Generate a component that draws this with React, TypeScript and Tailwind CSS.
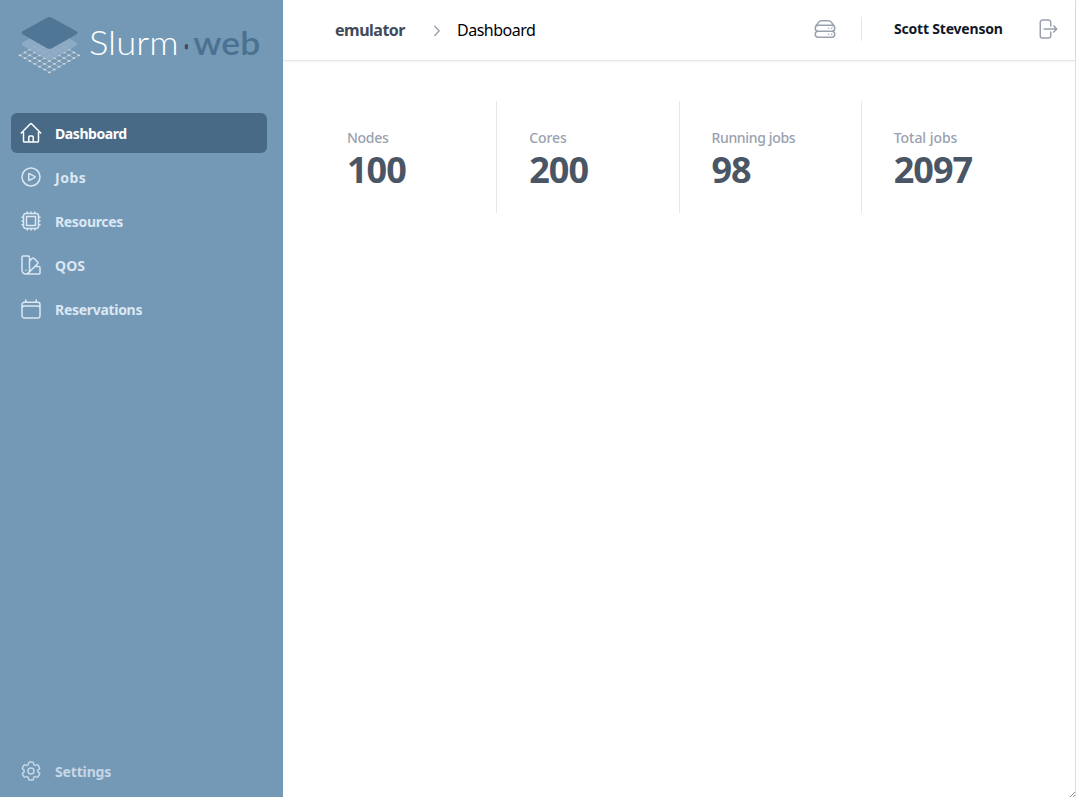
import type { ReactNode } from "react";
import type { IconType } from "react-icons";
import {
  HiOutlineHome,
  HiOutlinePlayCircle,
  HiOutlineCpuChip,
  HiOutlineSwatch,
  HiOutlineCalendar,
  HiOutlineCog6Tooth,
  HiOutlineServerStack,
  HiOutlineArrowRightOnRectangle,
} from "react-icons/hi2";

type NavItem = { label: string; icon: IconType; tracking: string };

const navigation: NavItem[] = [
  { label: "Dashboard", icon: HiOutlineHome, tracking: "pt-[2px] tracking-[-0.42px]" },
  { label: "Jobs", icon: HiOutlinePlayCircle, tracking: "pt-[2px] tracking-[0.5px]" },
  { label: "Resources", icon: HiOutlineCpuChip, tracking: "pt-[2px] tracking-[-0.35px]" },
  { label: "QOS", icon: HiOutlineSwatch, tracking: "pt-[2px] tracking-[0.1px]" },
  { label: "Reservations", icon: HiOutlineCalendar, tracking: "pt-[2px] tracking-[-0.3px]" },
];

const stats = [
  { label: "Nodes", value: "100", tracking: "tracking-[-0.3px]" },
  { label: "Cores", value: "200", tracking: "tracking-[-0.1px]" },
  { label: "Running jobs", value: "98", tracking: "tracking-[-0.35px]" },
  { label: "Total jobs", value: "2097", tracking: "tracking-[-0.05px]" },
];

const meshLines = [0, 1, 2, 3, 4, 5, 6];

function Logo() {
  return (
    <svg width="283" height="90" viewBox="0 0 283 90" role="img" aria-label="Slurm-web">
      <g stroke="#a3b5c4" strokeWidth="0.9" fill="none">
        {meshLines.map((i) => (
          <path
            key={i}
            d={`M${20 + i * 4.9} ${55.3 - i * 2.85}l29.4 17.1M${78.8 - i * 4.9} ${55.3 - i * 2.85}l-29.4 17.1`}
          />
        ))}
      </g>
      <g fill="#d6d8d9">
        {meshLines.map((i) =>
          meshLines.map((j) => (
            <ellipse key={`${i}-${j}`} cx={20 + (i + j) * 4.9} cy={55.3 + (j - i) * 2.85} rx="1.4" ry="0.9" />
          )),
        )}
      </g>
      <path d="M23 42.2 L47.5 28 Q49.5 27 51.5 28 L76 42.2 Q78.5 44 76 45.8 L51.5 59.5 Q49.5 60.8 47.5 59.5 L23 45.8 Q20.5 44 23 42.2Z" fill="#8facc4" fillOpacity="0.9" />
      <path d="M22.5 31.3 L47 17.7 Q49.5 16.3 52 17.7 L76.5 31.3 Q78.5 32.8 76.5 34.3 L52 48.2 Q49.5 49.6 47 48.2 L22.5 34.3 Q20.5 32.8 22.5 31.3Z" fill="#507696" />
      <text x="89" y="55.2" fontSize="33" fontWeight="300" fill="#fff" textLength="89.5" lengthAdjust="spacingAndGlyphs" fontFamily="Lato, sans-serif">
        Slurm
      </text>
      <rect x="184.8" y="44.2" width="3.2" height="5" rx="0.8" fill="#494b4d" />
      <text x="193.3" y="55.2" fontSize="32" fontWeight="600" fill="#4b7190" textLength="67" lengthAdjust="spacingAndGlyphs" fontFamily="Lato, sans-serif">
        web
      </text>
    </svg>
  );
}

function NavLink({ active, children }: { active?: boolean; children: ReactNode }) {
  return (
    <a
      className={
        active
          ? "flex h-10 items-center gap-3 rounded-md bg-[#486a86] px-2 text-sm font-bold text-white"
          : "flex h-10 items-center gap-3 rounded-md px-2 text-sm font-bold text-[#dbe7f2]"
      }
    >
      {children}
    </a>
  );
}

export default function App() {
  return (
    <div className="flex h-[797px] w-[1076px] overflow-hidden bg-white font-['Noto_Sans',sans-serif]">
      <aside className="flex w-[283px] shrink-0 flex-col bg-[#7499b6]">
        <Logo />
        <nav className="mt-[23px] ml-[11px] flex w-64 grow flex-col gap-1">
          {navigation.map(({ label, icon: Icon, tracking }, index) => (
            <NavLink key={label} active={index === 0}>
              <Icon className="size-6 shrink-0" />
              <span className={tracking}>{label}</span>
            </NavLink>
          ))}
          <a className="mt-auto mb-[6px] flex h-10 items-center gap-3 px-2 text-sm font-bold text-[#c6d7e6]">
            <HiOutlineCog6Tooth className="size-6 shrink-0" />
            <span className="pt-[2px] tracking-[-0.15px]">Settings</span>
          </a>
        </nav>
      </aside>

      <div className="relative flex grow flex-col border-r border-[#dcdddf]">
        <header className="flex h-[61px] shrink-0 items-center border-b border-gray-200 pr-[15px] pl-[52px] shadow-[0_1px_2px_0_rgba(0,0,0,0.05)]">
          <span className="w-[70px] text-base leading-6 font-bold tracking-[-0.5px] text-[#414b5a]">emulator</span>
          <svg className="ml-[22px] size-5 text-gray-400" viewBox="0 0 20 20" fill="none" stroke="currentColor" strokeWidth="1.4">
            <path d="M7.8 6.2 12.2 10.8 7.8 15.4" strokeLinecap="round" strokeLinejoin="round" />
          </svg>
          <span className="ml-[10px] text-base leading-6 tracking-[-0.5px] text-black">Dashboard</span>
          <div className="ml-auto flex items-center pb-[2px]">
            <HiOutlineServerStack className="size-6 text-gray-400" />
            <div className="ml-6 h-6 w-px bg-gray-200" />
            <span className="ml-8 w-[109px] text-sm leading-6 font-bold tracking-[-0.2px] whitespace-nowrap text-gray-900">
              Scott Stevenson
            </span>
            <HiOutlineArrowRightOnRectangle className="mr-px ml-8 size-6 text-gray-400" />
          </div>
        </header>

        <main className="mt-10 ml-8 grid h-28 w-[729px] grid-cols-4">
          {stats.map(({ label, value, tracking }, index) => (
            <div
              key={label}
              className={
                index < 3
                  ? "flex flex-col border-r border-gray-200 pt-[25px] pl-8"
                  : "flex flex-col pt-[25px] pl-8"
              }
            >
              <span className="text-sm leading-6 font-medium text-gray-400">
                <span className={tracking}>{label}</span>
              </span>
              <span className="text-4xl leading-10 font-bold tracking-[-1px] text-gray-600">{value}</span>
            </div>
          ))}
        </main>

        <svg className="absolute right-0 bottom-0 size-[5px]" viewBox="0 0 5 5" stroke="#777" strokeWidth="0.8">
          <path d="M0 5 5 0M3 5 5 3" />
        </svg>
      </div>
    </div>
  );
}
